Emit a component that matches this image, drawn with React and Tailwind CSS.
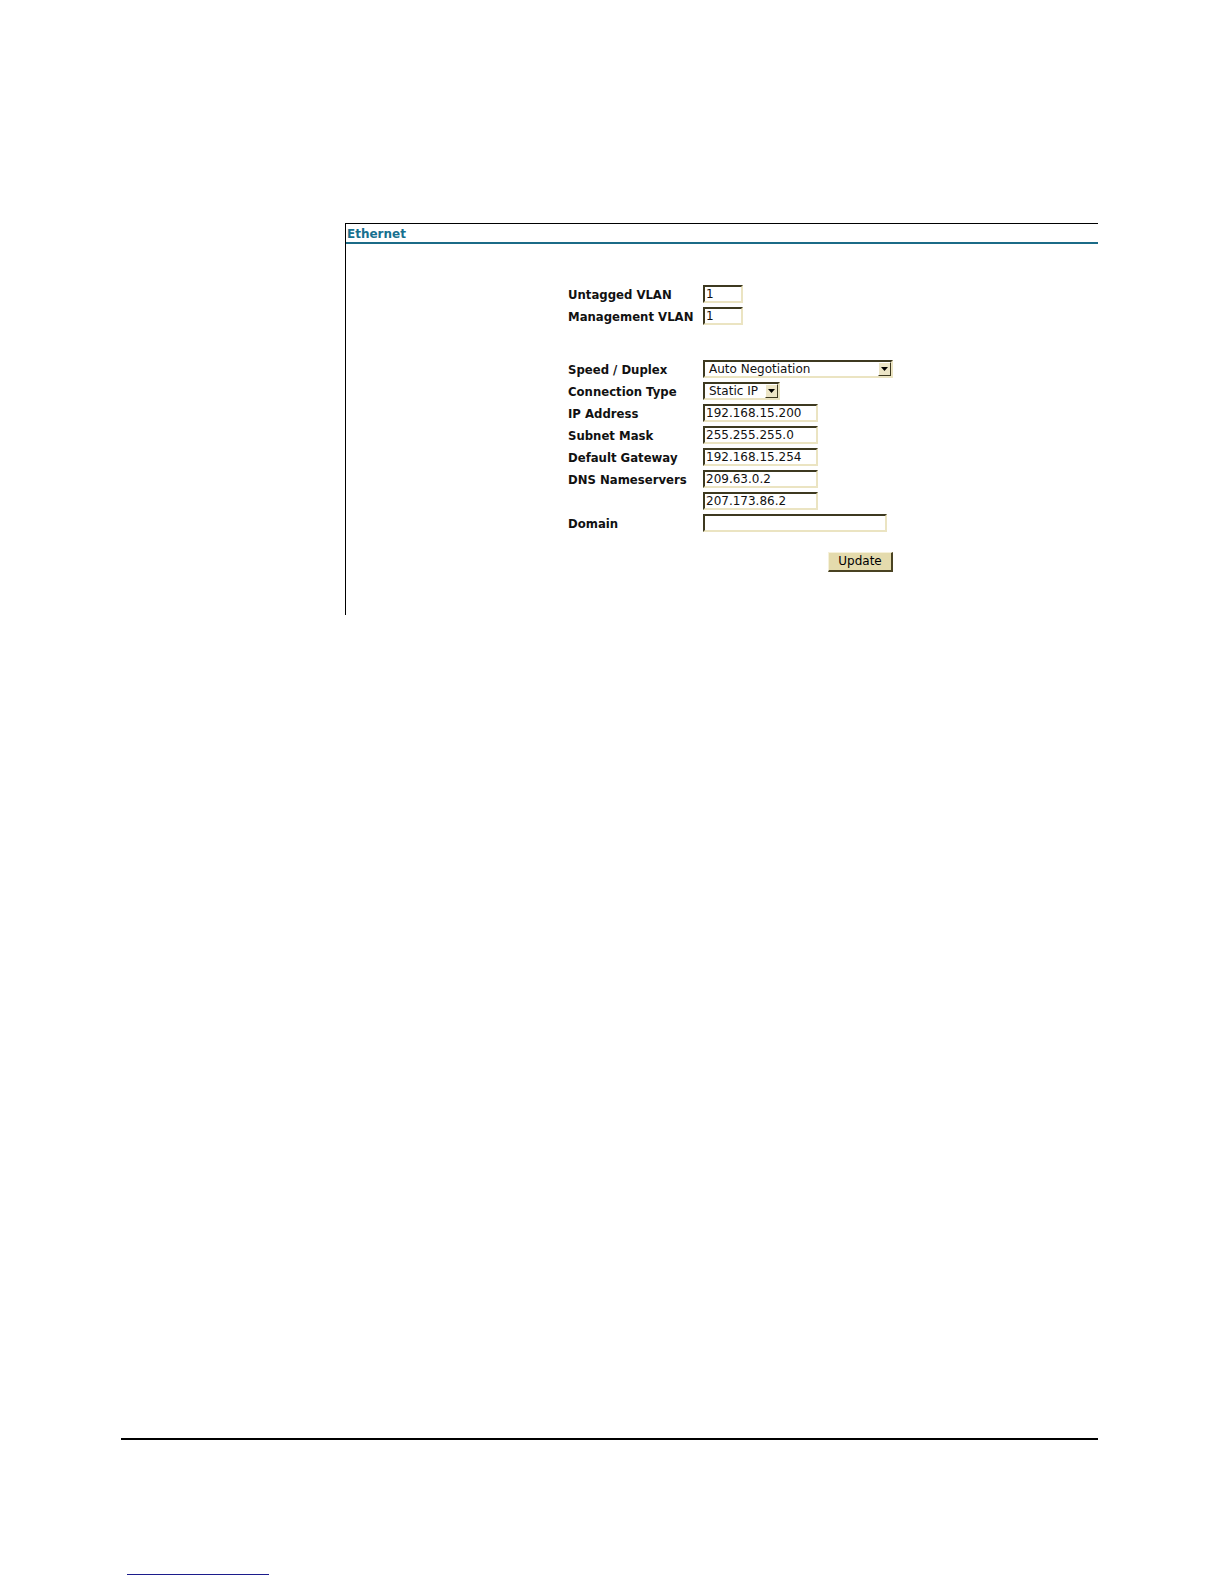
import React from 'react'

const inset =
  'border-2 border-t-[#3d3920] border-l-[#3d3920] border-b-[#ebe4c2] border-r-[#ebe4c2] bg-white'

function TextBox({ value, width }) {
  return (
    <input
      readOnly
      value={value}
      className={`${inset} ${width} h-[18px] pl-[1px] text-[12px] leading-[14px] text-[#111] outline-none font-['DejaVu_Sans',sans-serif]`}
    />
  )
}

function Dropdown({ value, width }) {
  return (
    <div className={`${inset} ${width} h-[18px] flex items-stretch`}>
      <span className="flex-1 pl-[4px] text-[12px] leading-[14px] text-[#111] whitespace-nowrap overflow-hidden">
        {value}
      </span>
      <span className="w-[13px] bg-[#ece5c6] border-r border-b border-[#3d3920] border-t border-l border-t-white border-l-white flex items-center justify-center">
        <svg width="7" height="4" viewBox="0 0 7 4">
          <path d="M0 0h7L3.5 4z" fill="#000" />
        </svg>
      </span>
    </div>
  )
}

function Row({ label, children }) {
  return (
    <>
      <div className="h-[18px] pt-[4px] flex items-center text-[11.7px] font-bold text-[#111] whitespace-nowrap">
        {label}
      </div>
      <div className="h-[18px] flex items-center">{children}</div>
    </>
  )
}

export default function App() {
  return (
    <div className="w-[1224px] h-[1584px] bg-white font-['DejaVu_Sans',sans-serif] flex flex-col">
      {/* Ethernet panel */}
      <div className="pt-[223px] pl-[345px]">
        <div className="w-[753px] h-[392px] border-t border-l border-black">
          <div className="h-[20px] border-b-2 border-[#1b6b87] pl-[1px] pt-[2px] text-[12px] leading-[16px] font-bold text-[#17708f]">
            Ethernet
          </div>

          <div className="ml-[222px] mt-[41px]">
            <div className="grid grid-cols-[135px_auto] gap-y-[4px]">
              <Row label="Untagged VLAN">
                <TextBox value="1" width="w-[40px]" />
              </Row>
              <Row label="Management VLAN">
                <TextBox value="1" width="w-[40px]" />
              </Row>
            </div>

            <div className="grid grid-cols-[135px_auto] gap-y-[4px] mt-[35px]">
              <Row label="Speed / Duplex">
                <Dropdown value="Auto Negotiation" width="w-[190px]" />
              </Row>
              <Row label="Connection Type">
                <Dropdown value="Static IP" width="w-[77px]" />
              </Row>
              <Row label="IP Address">
                <TextBox value="192.168.15.200" width="w-[115px]" />
              </Row>
              <Row label="Subnet Mask">
                <TextBox value="255.255.255.0" width="w-[115px]" />
              </Row>
              <Row label="Default Gateway">
                <TextBox value="192.168.15.254" width="w-[115px]" />
              </Row>
              <Row label="DNS Nameservers">
                <TextBox value="209.63.0.2" width="w-[115px]" />
              </Row>
              <Row label="">
                <TextBox value="207.173.86.2" width="w-[115px]" />
              </Row>
              <Row label="Domain">
                <TextBox value="" width="w-[184px]" />
              </Row>
            </div>

            <div className="mt-[16px] pl-[260px]">
              <button className="w-[65px] h-[20px] bg-[#e4dbad] border border-t-[#f6f1da] border-l-[#f6f1da] border-b-[#4a4322] border-r-[#4a4322] border-b-2 border-r-2 text-[12px] leading-[14px] text-black">
                Update
              </button>
            </div>
          </div>
        </div>
      </div>

      {/* page footer rules */}
      <div className="mt-[823px] ml-[121px] w-[977px] h-[2px] bg-black" />
      <div className="mt-[134px] ml-[127px] w-[142px] h-[1px] bg-[#1c1c8c]" />
    </div>
  )
}
